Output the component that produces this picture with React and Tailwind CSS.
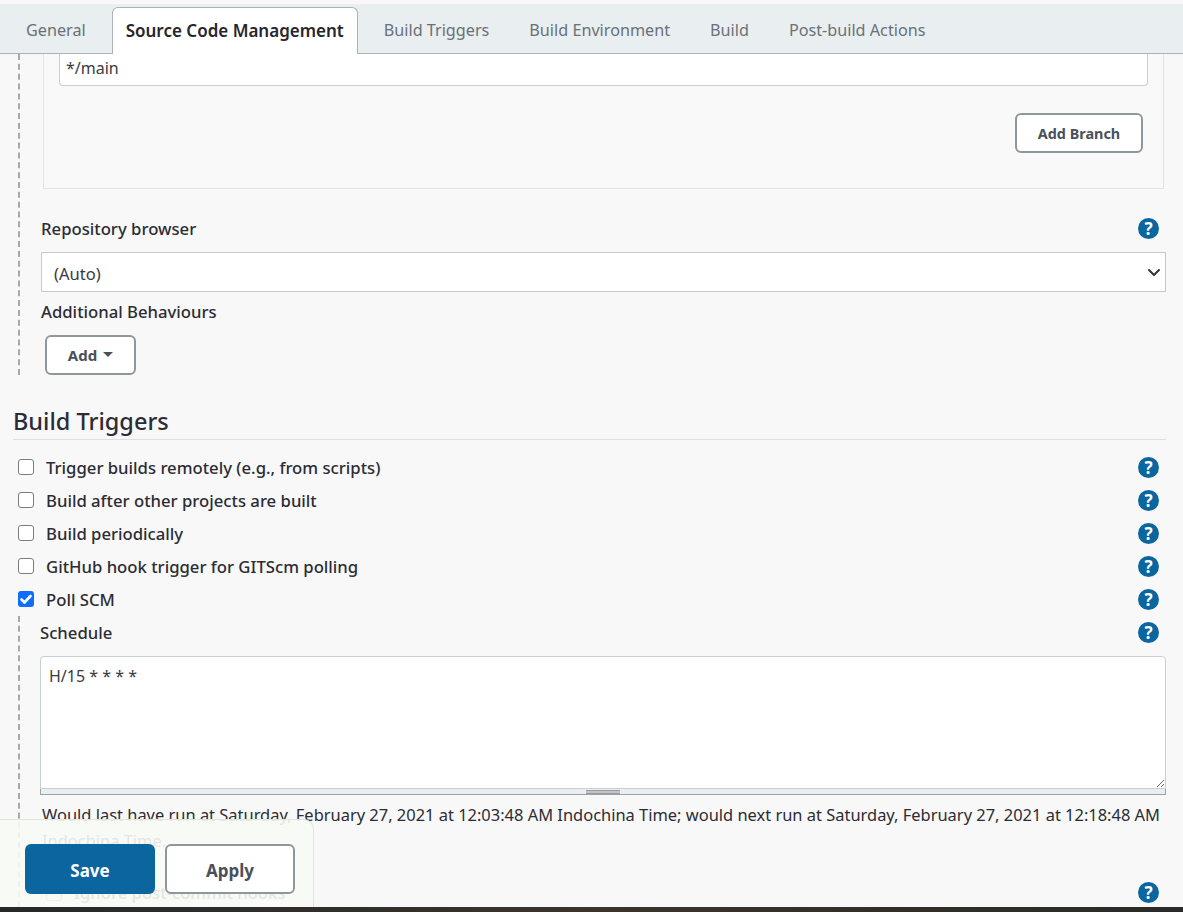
const FONT = "font-['Noto_Sans','Open_Sans',sans-serif]"

function Help() {
  return (
    <span className="flex h-[21px] w-[21px] items-center justify-center rounded-full bg-[#0b659f] text-[17px] font-bold leading-none text-white">
      ?
    </span>
  )
}

function Check({ checked }) {
  return checked ? (
    <span className="flex h-4 w-4 items-center justify-center rounded-[3px] bg-[#0d6efd]">
      <svg viewBox="0 0 16 16" className="h-4 w-4" fill="none" stroke="#fff" strokeWidth="2.6" strokeLinecap="round" strokeLinejoin="round">
        <path d="M3.5 8.5l3 3 6-6.5" />
      </svg>
    </span>
  ) : (
    <span className="h-[16px] w-[16px] rounded-[3px] border border-[#7d7d7d] bg-white" />
  )
}

function TriggerRow({ label, checked }) {
  return (
    <div className="flex h-[33px] items-center justify-between pl-[5px] pr-[7px]">
      <label className="flex items-center gap-[12px] text-[16.7px] font-medium text-[#2c2c34]">
        <Check checked={checked} />
        {label}
      </label>
      <Help />
    </div>
  )
}

const TABS = ['General', 'Source Code Management', 'Build Triggers', 'Build Environment', 'Build', 'Post-build Actions']

function Tabs() {
  return (
    <div className="mt-[4px] flex h-[50px] shrink-0 items-end gap-[12px] border-b border-[#a9b3b9] bg-[#e9eef1] pl-[12px]">
      {TABS.map((t, i) =>
        i === 1 ? (
          <div key={t} className="-mb-px flex h-[47px] items-center rounded-t-[6px] border border-b-0 border-[#a9b3b9] bg-white px-[13px] text-[17px] font-semibold text-[#26262c]">
            {t}
          </div>
        ) : (
          <div key={t} className="flex h-[46px] items-center px-[14px] text-[16.2px] text-[#6a7177]">
            {t}
          </div>
        )
      )}
    </div>
  )
}

export default function App() {
  return (
    <div className={`${FONT} relative flex h-[912px] w-full flex-col overflow-hidden bg-[#f8f8f8]`}>
      <Tabs />

      <main className="flex min-h-0 flex-1 flex-col pl-[13px] pr-[17px]">
        <div className="ml-[5px] border-l-2 border-dashed border-[#a8a8a8] pl-[21px]">
          <div className="ml-[2px] mr-[2px] h-[135px] border-x border-b border-[#e3e3e3] bg-[#f9f9f9] pl-[15px] pr-[15px]">
            <input
              readOnly
              value="*/main"
              className="h-[32px] w-full rounded-b-[4px] border-x border-b border-[#c9ced1] bg-white px-[6px] pb-[3px] text-[16px] text-[#3a3a40] outline-none"
            />
            <div className="mt-[27px] flex justify-end pr-[5px]">
              <button className="h-[40px] w-[128px] rounded-[6px] border-2 border-[#8f979d] bg-white pt-[1px] text-[14.4px] font-bold text-[#4a505a]">
                Add Branch
              </button>
            </div>
          </div>

          <div className="mt-[28px] flex items-center justify-between pr-[7px]">
            <span className="text-[16.7px] font-medium leading-[24px] text-[#2c2c34]">Repository browser</span>
            <span className="-mt-[2px]">
              <Help />
            </span>
          </div>
          <div className="relative mt-[11px]">
            <select className="h-[40px] w-full appearance-none border border-[#c8c8c8] bg-white pl-[12px] pt-[4px] text-[16.5px] text-[#3a3a40] outline-none">
              <option>(Auto)</option>
            </select>
            <svg viewBox="0 0 16 16" className="absolute right-[4px] top-[12px] h-[16px] w-[16px]" fill="none" stroke="#333" strokeWidth="2" strokeLinecap="round" strokeLinejoin="round">
              <path d="M3 6l5 5 5-5" />
            </svg>
          </div>
          <div className="mt-[8px] text-[16.7px] font-medium leading-[24px] text-[#2c2c34]">Additional Behaviours</div>
          <button className="ml-[4px] mt-[11px] flex h-[40px] w-[91px] items-center justify-center gap-[6px] rounded-[6px] border-2 border-[#8f979d] bg-white text-[15px] font-bold text-[#4a505a]">
            Add
            <span className="mb-[2px] h-0 w-0 border-x-[5px] border-t-[5px] border-x-transparent border-t-[#4a505a]" />
          </button>
        </div>

        <h2 className="mt-[29px] border-b border-[#dfdfdf] pb-[1px] text-[23.5px] font-medium leading-[34px] text-[#2c2c34]">Build Triggers</h2>

        <div className="mt-[11px]">
          <TriggerRow label="Trigger builds remotely (e.g., from scripts)" />
          <TriggerRow label="Build after other projects are built" />
          <TriggerRow label="Build periodically" />
          <TriggerRow label="GitHub hook trigger for GITScm polling" />
          <TriggerRow label="Poll SCM" checked />
        </div>

        <div className="ml-[5px] flex-1 border-l-2 border-dashed border-[#a8a8a8] pl-[20px]">
          <div className="flex h-[33px] items-center justify-between pr-[7px]">
            <span className="text-[16.7px] font-medium text-[#2c2c34]">Schedule</span>
            <Help />
          </div>
          <textarea
            readOnly
            value="H/15 * * * *"
            className="mt-[7px] block h-[133px] w-full rounded-t-[4px] border border-[#c9ced1] bg-white px-[8px] py-[6px] text-[16px] leading-[26px] text-[#3a3a40] outline-none"
          />
          <div className="flex h-[6px] items-center justify-center border-x border-b border-[#9aa3a9] bg-[#e9eef1]">
            <span className="h-[4px] w-[34px] border-y border-[#9a9a9a] bg-[#c4c4c4]" />
          </div>
          <p className="mt-[7px] pl-[2px] text-[16.45px] leading-[26px] text-[#2c2c34]">
            Would last have run at Saturday, February 27, 2021 at 12:03:48 AM Indochina Time; would next run at Saturday, February 27, 2021 at 12:18:48 AM Indochina Time.
          </p>
          <div className="mt-[26px] flex items-center justify-between pl-[6px] pr-[7px]">
            <label className="flex items-center gap-[12px] text-[16.7px] font-medium text-[#2c2c34]">
              <Check />
              Ignore post-commit hooks
            </label>
            <Help />
          </div>
        </div>
      </main>

      <div className="h-[5px] shrink-0 bg-gradient-to-r from-[#24282b] via-[#3a342c] to-[#2a2a28]" />

      <div className="absolute bottom-[5px] left-0 flex h-[88px] w-[314px] items-start gap-[10px] rounded-tr-[10px] border-r border-t border-[#dfe5d9] bg-[#f7f9f4]/90 pl-[25px] pt-[24px]">
        <button className="h-[50px] w-[130px] rounded-[6px] bg-[#0b659f] pt-[4px] text-[17px] font-bold text-white">Save</button>
        <button className="h-[50px] w-[130px] rounded-[6px] border-2 border-[#8f979d] bg-white pt-[4px] text-[17px] font-bold text-[#4a505a]">Apply</button>
      </div>
    </div>
  )
}
